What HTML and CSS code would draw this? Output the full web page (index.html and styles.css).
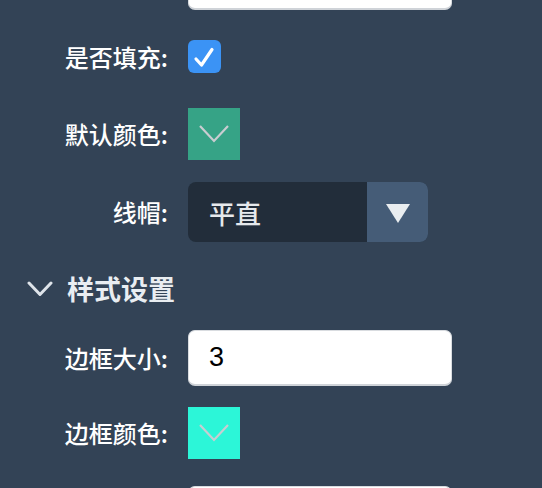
FILE: index.html
```html
<!DOCTYPE html>
<html lang="zh">
<head>
<meta charset="utf-8">
<link rel="stylesheet" href="styles.css">
</head>
<body>
<div class="form">
  <div class="item row-top">
    <div class="label"></div>
    <div class="input"></div>
  </div>
  <div class="item row-check">
    <div class="label">是否填充:</div>
    <div class="checkbox">
      <svg width="33" height="33" viewBox="0 0 33 33"><path d="M8 19 L13.5 25 L24 9.5" fill="none" stroke="#fff" stroke-width="3.2" stroke-linecap="round" stroke-linejoin="round"/></svg>
    </div>
  </div>
  <div class="item row-color1">
    <div class="label">默认颜色:</div>
    <div class="swatch swatch-green">
      <svg width="52" height="52" viewBox="0 0 52 52"><path d="M12 18 L26 33 L40 18" fill="none" stroke="#c9cdd1" stroke-width="2.2"/></svg>
    </div>
  </div>
  <div class="item row-select">
    <div class="label">线帽:</div>
    <div class="select">
      <div class="select-text">平直</div>
      <div class="select-btn">
        <svg width="24" height="20" viewBox="0 0 24 20"><path d="M0 0 H24 L12 19 Z" fill="#e9edf0"/></svg>
      </div>
    </div>
  </div>
  <div class="section">
    <svg class="section-chevron" width="26" height="16" viewBox="0 0 26 16"><path d="M2 2 L13 13.5 L24 2" fill="none" stroke="#dfe4ea" stroke-width="3" stroke-linecap="round" stroke-linejoin="round"/></svg>
    <span class="section-title">样式设置</span>
  </div>
  <div class="item row-input">
    <div class="label">边框大小:</div>
    <div class="input"><span class="input-text">3</span></div>
  </div>
  <div class="item row-color2">
    <div class="label">边框颜色:</div>
    <div class="swatch swatch-cyan">
      <svg width="52" height="52" viewBox="0 0 52 52"><path d="M12 18 L26 33 L40 18" fill="none" stroke="#c9cdd1" stroke-width="2.2"/></svg>
    </div>
  </div>
  <div class="item row-bottom">
    <div class="label"></div>
    <div class="input"></div>
  </div>
</div>
</body>
</html>
```
FILE: styles.css
```css
html, body {
  margin: 0;
  padding: 0;
  height: 100%;
  overflow: hidden;
  background: #334356;
  font-family: "Noto Sans CJK SC", "Noto Sans", sans-serif;
}

.form {
  display: flex;
  flex-direction: column;
}

.item {
  display: flex;
  align-items: center;
}

.label {
  width: 168px;
  flex: none;
  text-align: right;
  font-size: 24px;
  font-weight: 500;
  line-height: 1;
  color: #ffffff;
  margin-right: 20px;
}

.row-top { margin-top: -46px; }
.row-check { margin-top: 30px; }
.row-color1 { margin-top: 35px; }
.row-select { margin-top: 22px; }
.section { margin-top: 32px; }
.row-input { margin-top: 26px; }
.row-color2 { margin-top: 21px; }
.row-bottom { margin-top: 27px; }

.input {
  box-sizing: border-box;
  width: 264px;
  height: 56px;
  background: #ffffff;
  border: 1px solid #d9dce0;
  border-bottom: 2px solid #cfd3d8;
  border-radius: 7px;
  display: flex;
  align-items: center;
  padding-left: 20px;
}

.input-text {
  font-family: "Liberation Sans", Arial, sans-serif;
  font-size: 27px;
  color: #000;
}

.checkbox {
  width: 33px;
  height: 33px;
  border-radius: 6px;
  background: #3b93f5;
  display: flex;
}

.swatch {
  width: 52px;
  height: 52px;
  display: flex;
}

.swatch-green { background: #36a386; }
.swatch-cyan { background: #2cf6d8; }

.select {
  width: 240px;
  height: 60px;
  border-radius: 8px;
  background: #222d3a;
  display: flex;
  overflow: hidden;
}

.select-text {
  flex: 1;
  display: flex;
  align-items: center;
  padding-left: 21px;
  font-size: 26px;
  font-weight: 500;
  color: #e6e9ec;
}

.select-btn {
  width: 61px;
  background: #455c77;
  display: flex;
  align-items: center;
  justify-content: center;
  padding-top: 4px;
  box-sizing: border-box;
}

.section {
  display: flex;
  align-items: center;
  height: 30px;
  padding-left: 27px;
}

.section-chevron {
  flex: none;
  margin-right: 14px;
}

.section-title {
  font-size: 27px;
  font-weight: bold;
  line-height: 30px;
  color: #e9edf1;
}
```
